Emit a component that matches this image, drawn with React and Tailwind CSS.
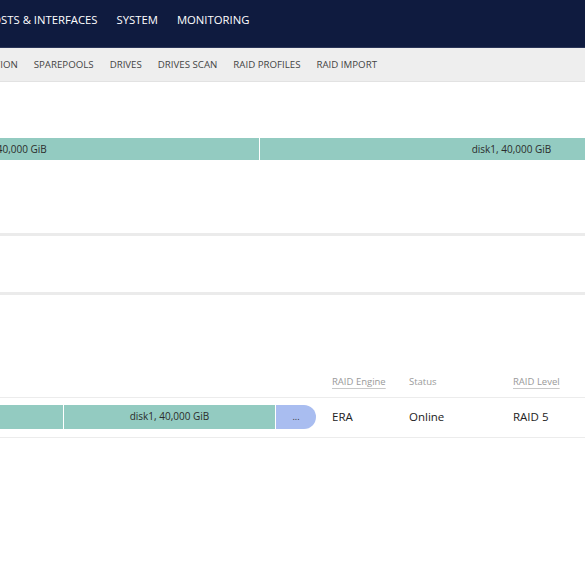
const TOP_NAV = ['HOSTS & INTERFACES', 'SYSTEM', 'MONITORING']
const SUB_NAV = ['CONFIGURATION', 'SPAREPOOLS', 'DRIVES', 'DRIVES SCAN', 'RAID PROFILES', 'RAID IMPORT']

const font = { fontFamily: '"Open Sans", "Noto Sans", sans-serif' }

function Segment({ label, className }) {
  return (
    <div className={'h-full flex items-center justify-center bg-[#93cbc1] text-[10px] text-[#2b2b2b] flex-shrink-0 ' + className}>
      {label}
    </div>
  )
}

export default function App() {
  return (
    <div className="w-[585px] h-[585px] overflow-hidden bg-white" style={font}>
      <div className="h-[48px] bg-[#0f1b3f] border-b border-[#2a3558] flex items-center pb-[6px]">
        <div className="flex gap-[19px] ml-[-16px] text-[11.3px] text-white font-medium">
          {TOP_NAV.map((t) => <span key={t} className="whitespace-nowrap">{t}</span>)}
        </div>
      </div>

      <div className="h-[34px] bg-[#eeeeee] border-b border-[#e2e2e2] flex items-center pt-[2px]">
        <div className="flex gap-[16px] ml-[-60px] text-[9.7px] text-[#444]">
          {SUB_NAV.map((t) => <span key={t} className="whitespace-nowrap">{t}</span>)}
        </div>
      </div>

      <div className="h-[22px] mt-[56px] flex gap-px ml-[-245px]">
        <Segment label="disk0, 40,000 GiB" className="w-[504px]" />
        <Segment label="disk1, 40,000 GiB" className="w-[503px]" />
      </div>

      <div className="h-[3px] bg-[#ebebeb] mt-[73px]" />
      <div className="h-[3px] bg-[#ebebeb] mt-[56px]" />

      <div className="mt-[79px] flex items-end h-[24px] pb-[8px] border-b border-[#ececec] text-[9.5px] text-[#9a9a9a]">
        <div className="w-[332px] flex-shrink-0" />
        <span className="w-[77px] flex-shrink-0"><span className="underline decoration-[#c8c8c8] underline-offset-[3px]">RAID Engine</span></span>
        <span className="w-[104px] flex-shrink-0">Status</span>
        <span className="underline decoration-[#c8c8c8] underline-offset-[3px]">RAID Level</span>
      </div>

      <div className="h-[40px] flex items-center border-b border-[#ececec] text-[11.5px] text-[#222] pb-[2px]">
        <div className="w-[316px] flex-shrink-0 h-[24px] flex gap-px overflow-hidden justify-end">
          <Segment label="disk0, 40,000 GiB" className="w-[211px]" />
          <Segment label="disk1, 40,000 GiB" className="w-[211px]" />
          <div className="w-[40px] flex-shrink-0 h-full bg-[#a9bdf0] rounded-r-[12px] flex items-center justify-center text-[9px] text-[#333]">...</div>
        </div>
        <span className="w-[16px] flex-shrink-0" />
        <span className="w-[77px] flex-shrink-0">ERA</span>
        <span className="w-[104px] flex-shrink-0">Online</span>
        <span>RAID 5</span>
      </div>
    </div>
  )
}
